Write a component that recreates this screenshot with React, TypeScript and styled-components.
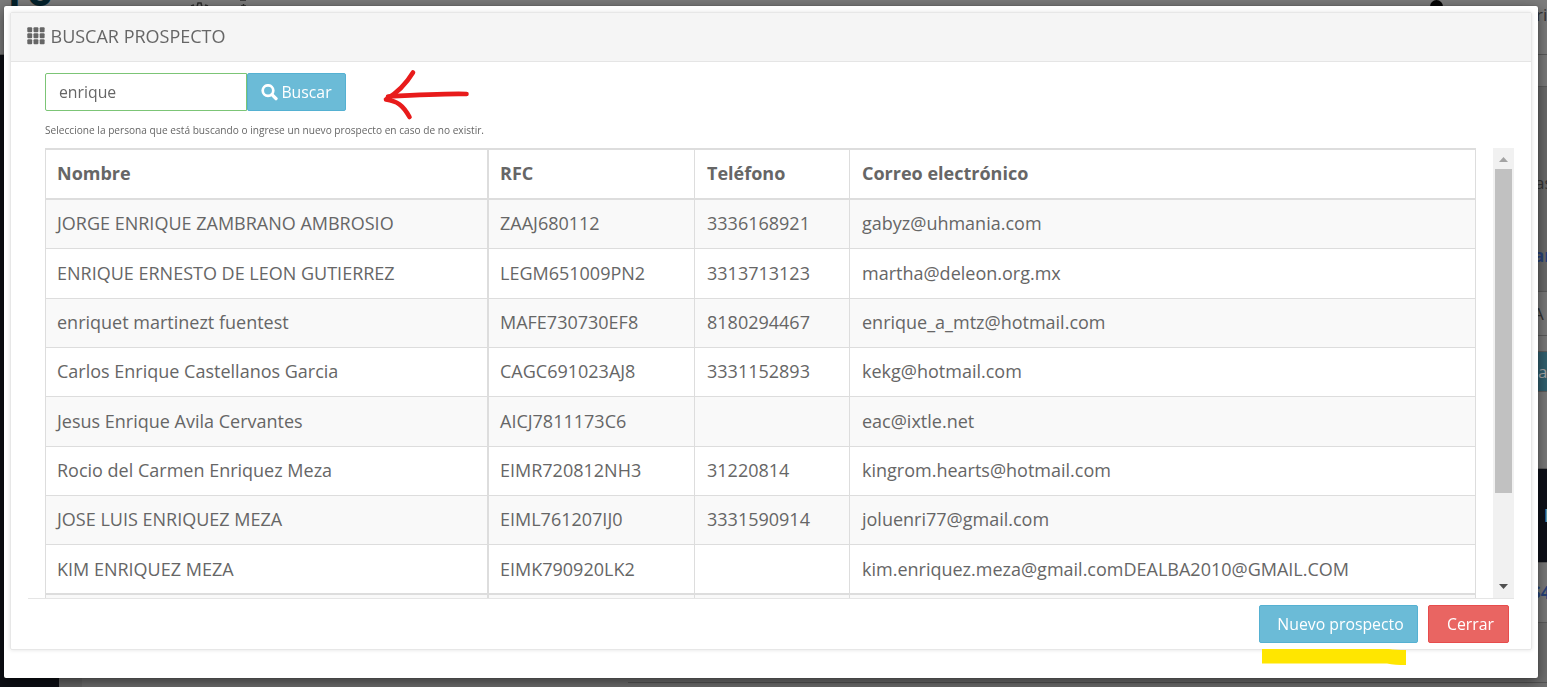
import { memo } from 'react';
import styled, { createGlobalStyle } from 'styled-components';

const GlobalStyle = createGlobalStyle`
  * {
    box-sizing: border-box;
  }

  body {
    margin: 0;
    overflow: hidden;
    font-family: 'Open Sans', sans-serif;
    font-size: 18px;
    color: #666;
  }
`;

/* Page under the dialog */

const Page = styled.div`
  display: grid;
  grid-template-columns: 59px 23px 546px 1fr;
  grid-template-rows: 55px 1fr;
  width: 100vw;
  height: 687px;
  overflow: hidden;
  background-color: #6f6f6f;
`;

const TopBar = styled.div`
  grid-column: 1 / -1;
  display: flex;
  background-color: #7c7c7c;
  border-bottom: 1px solid #5a5a5a;
`;

const Brand = styled.div`
  width: 180px;
  padding-left: 8px;
  color: #04222c;
  font-size: 42px;
  font-weight: 700;
  line-height: 1;
  margin-top: -31px;
`;

const TopIcons = styled.svg`
  width: 80px;
  height: 8px;
`;

const Avatar = styled.div`
  width: 13px;
  height: 13px;
  margin-left: auto;
  border-radius: 50%;
  background-color: #050505;
`;

const UserName = styled.div`
  width: 17px;
  margin-left: 87px;
  padding: 3px 0 0 6px;
  color: #333;
  font-size: 17px;
  white-space: nowrap;
`;

const Sidebar = styled.div`
  background-color: #0d0f15;
`;

const Gutter = styled.div`
  background-color: #676767;
`;

const Middle = styled.div`
  background-color: #6f6f6f;
`;

const Side = styled.div`
  display: flex;
  flex-direction: column;
  align-items: flex-end;
  height: 628px;
  border-bottom: 1px solid #555;
`;

const SideCell = styled.div<{ $height: number; $indent?: number; $bg?: string; $color?: string; $bold?: boolean; $flat?: boolean }>`
  display: flex;
  flex: none;
  align-items: center;
  width: 17px;
  height: ${({ $height }) => $height}px;
  padding-left: ${({ $indent }) => $indent || 0}px;
  background-color: ${({ $bg }) => $bg || '#7a7a7a'};
  color: ${({ $color }) => $color || '#333'};
  font-size: 17px;
  font-weight: ${({ $bold }) => ($bold ? 700 : 400)};
  border-bottom: ${({ $flat }) => ($flat ? 0 : 1)}px solid #5c5c5c;
  white-space: nowrap;
`;

/* Dialog */

const Dialog = styled.div`
  position: fixed;
  top: 6px;
  left: 4px;
  width: 1534px;
  height: 672px;
  padding: 6px 6px 0;
  background-color: white;
  border-radius: 2px;
  box-shadow: 0 4px 14px rgba(0, 0, 0, 0.5), 0 0 1px rgba(0, 0, 0, 0.6);
`;

const Panel = styled.div`
  display: flex;
  flex-direction: column;
  height: 638px;
  border: 1px solid #e7e7e7;
  border-radius: 2px;
  box-shadow: 0 0 4px rgba(0, 0, 0, 0.12);
`;

const PanelHeader = styled.div`
  display: flex;
  align-items: center;
  gap: 5.5px;
  height: 49px;
  flex: none;
  padding: 0 0 2px 16px;
  background-color: #f5f5f5;
  border-bottom: 1px solid #e5e5e5;
`;

const PanelBody = styled.div`
  flex: none;
  height: 537px;
  margin: 0 17px 0 17px;
  padding: 11px 0 0 17px;
  border-bottom: 1px solid #e5e5e5;
`;

const SearchRow = styled.div`
  display: flex;
  height: 38px;
`;

const SearchInput = styled.input`
  width: 202px;
  padding: 0 13px;
  border: 1px solid #7cc576;
  border-radius: 2px 0 0 2px;
  color: #666;
  font-family: inherit;
  font-size: 15.8px;
  outline: none;
`;

const Button = styled.button<{ $danger?: boolean; $width: number; $shift?: number }>`
  display: flex;
  align-items: center;
  justify-content: center;
  gap: 3px;
  width: ${({ $width }) => $width}px;
  height: 38px;
  padding: 0 0 0 ${({ $shift }) => $shift || 0}px;
  border: 1px solid ${({ $danger }) => ($danger ? '#e74c4c' : '#55b1d2')};
  border-radius: 2px;
  background-color: ${({ $danger }) => ($danger ? '#e96562' : '#6bbbd7')};
  color: white;
  font-family: inherit;
  font-size: 15.8px;
`;

const Hint = styled.div`
  height: 37px;
  padding-top: 12px;
  font-size: 10.13px;
  line-height: 15px;
`;

const ScrollArea = styled.div`
  display: flex;
  justify-content: space-between;
  height: 450px;
  overflow: hidden;
`;

const Table = styled.div`
  width: 1431px;
  flex: none;
  border: 1px solid #ddd;
  border-top-width: 2px;
  border-bottom: 0;
  height: 470px;
`;

const Row = styled.div<{ $height: number; $striped?: boolean; $thick?: boolean; $head?: boolean }>`
  display: grid;
  grid-template-columns: 443px 206px 155px 1fr;
  height: ${({ $height }) => $height}px;
  background-color: ${({ $striped }) => ($striped ? '#f9f9f9' : 'white')};
  border-bottom: ${({ $thick }) => ($thick ? 2 : 1)}px solid #ddd;
  font-weight: ${({ $head }) => ($head ? 700 : 400)};
`;

const Cell = styled.div<{ $last?: boolean }>`
  display: flex;
  align-items: center;
  padding: 0 0 ${({ $last }) => ($last ? 1 : 2)}px 12px;
  border-right: 1px solid #ddd;
  white-space: nowrap;

  &:first-child {
    padding-left: 11px;
    border-right-width: 2px;
  }

  &:nth-child(2) {
    padding-left: 11px;
  }

  &:last-child {
    border-right: 0;
  }
`;

const ScrollBar = styled.div`
  display: flex;
  flex-direction: column;
  width: 21px;
  background-color: #f1f1f1;
`;

const ScrollArrow = styled.svg`
  flex: none;
  width: 21px;
  height: 21px;
`;

const ScrollThumb = styled.div`
  width: 17px;
  height: 324px;
  margin: 0 2px auto;
  background-color: #c1c1c1;
`;

const Footer = styled.div`
  display: flex;
  justify-content: flex-end;
  gap: 10px;
  padding: 6px 22px 0 0;
`;

const ArrowMark = styled.svg`
  position: absolute;
  top: 54px;
  left: 371px;
  width: 105px;
  height: 65px;
`;

const Highlight = styled.svg`
  position: absolute;
  top: 642px;
  left: 1257px;
  width: 146px;
  height: 18px;
`;

type Prospect = {
  name: string;
  rfc: string;
  phone?: string;
  email: string;
  height: number;
}

const prospects: Array<Prospect> = [
  { name: 'JORGE ENRIQUE ZAMBRANO AMBROSIO', rfc: 'ZAAJ680112', phone: '3336168921', email: 'gabyz@uhmania.com', height: 49 },
  { name: 'ENRIQUE ERNESTO DE LEON GUTIERREZ', rfc: 'LEGM651009PN2', phone: '3313713123', email: 'martha@deleon.org.mx', height: 50 },
  { name: 'enriquet martinezt fuentest', rfc: 'MAFE730730EF8', phone: '8180294467', email: 'enrique_a_mtz@hotmail.com', height: 49 },
  { name: 'Carlos Enrique Castellanos Garcia', rfc: 'CAGC691023AJ8', phone: '3331152893', email: 'kekg@hotmail.com', height: 49 },
  { name: 'Jesus Enrique Avila Cervantes', rfc: 'AICJ7811173C6', email: 'eac@ixtle.net', height: 50 },
  { name: 'Rocio del Carmen Enriquez Meza', rfc: 'EIMR720812NH3', phone: '31220814', email: 'kingrom.hearts@hotmail.com', height: 49 },
  { name: 'JOSE LUIS ENRIQUEZ MEZA', rfc: 'EIML761207IJ0', phone: '3331590914', email: 'joluenri77@gmail.com', height: 49 },
  { name: 'KIM ENRIQUEZ MEZA', rfc: 'EIMK790920LK2', email: 'kim.enriquez.meza@gmail.comDEALBA2010@GMAIL.COM', height: 50 },
];

const GridIcon = () => (
  <svg width="18" height="18" viewBox="0 0 18 18" fill="#666">
    {[0, 6, 12].map(y => [0, 6.2, 12.4].map(x => (
      <rect key={`${x}-${y}`} x={x + 0.3} y={y + 0.3} width="4.9" height="5" rx="1" />
    )))}
  </svg>
);

const SearchIcon = () => (
  <svg width="17" height="17" viewBox="0 0 17 17" fill="none" stroke="white">
    <circle cx="7" cy="6.6" r="5.3" strokeWidth="2.7" />
    <path d="M11 10.600l4 4" strokeWidth="3.4" strokeLinecap="round" />
  </svg>
);

const ProspectRow: React.FC<{ item: Prospect; last: boolean; striped: boolean }> = memo(({ item, last, striped }) => (
  <Row $height={item.height} $striped={striped} $thick={last}>
    <Cell $last={last}>{item.name}</Cell>
    <Cell $last={last}>{item.rfc}</Cell>
    <Cell $last={last}>{item.phone}</Cell>
    <Cell $last={last}>{item.email}</Cell>
  </Row>
));

const App = () => (
  <>
    <GlobalStyle />
    <Page>
      <TopBar>
        <Brand>ro</Brand>
        <TopIcons viewBox="0 0 80 8" fill="none" stroke="#2c2c2c" strokeWidth="1.5">
          <path d="M11 6l3-1M17 7l1-4h3l1 4M25 5l3 1" />
          <path d="M60 0h6M61 6h5M63.500 4v3" />
        </TopIcons>
        <Avatar />
        <UserName>ri</UserName>
      </TopBar>
      <Sidebar />
      <Gutter />
      <Middle />
      <Side>
        <SideCell $height={32} />
        <SideCell $height={70} $bg="#6a6a6a" $flat />
        <SideCell $height={51} $indent={5} $bg="#6a6a6a" $flat>as</SideCell>
        <SideCell $height={12} $bg="#6a6a6a" $flat />
        <SideCell $height={72} $indent={4} $bg="#6a6a6a" $color="#27427a" $bold>an</SideCell>
        <SideCell $height={44} $indent={3}>A</SideCell>
        <SideCell $height={16} />
        <SideCell $height={40} $indent={8} $bg="#31606f" $color="#aaa">a</SideCell>
        <SideCell $height={77} />
        <SideCell $height={94} $indent={14} $bg="#0d1018" $color="#5f9bab" $bold>I</SideCell>
        <SideCell $height={60} $indent={1} $color="#27427a" $bold>$4</SideCell>
      </Side>
    </Page>
    <Dialog>
      <Panel>
        <PanelHeader>
          <GridIcon />
          <span>BUSCAR PROSPECTO</span>
        </PanelHeader>
        <PanelBody>
          <SearchRow>
            <SearchInput defaultValue="enrique" />
            <Button $width={99}>
              <SearchIcon />
              Buscar
            </Button>
          </SearchRow>
          <Hint>Seleccione la persona que está buscando o ingrese un nuevo prospecto en caso de no existir.</Hint>
          <ScrollArea>
            <Table>
              <Row $height={50} $thick $head>
                <Cell>Nombre</Cell>
                <Cell>RFC</Cell>
                <Cell>Teléfono</Cell>
                <Cell>Correo electrónico</Cell>
              </Row>
              {prospects.map((item, index) => (
                <ProspectRow
                  key={item.rfc}
                  item={item}
                  striped={index % 2 === 0}
                  last={index === prospects.length - 1}
                />
              ))}
              <Row $height={49} $striped>
                <Cell />
                <Cell />
                <Cell />
                <Cell />
              </Row>
            </Table>
            <ScrollBar>
              <ScrollArrow viewBox="0 0 21 21"><path d="M6 14l4.500-5 4.500 5z" fill="#a3a3a3" /></ScrollArrow>
              <ScrollThumb />
              <ScrollArrow viewBox="0 0 21 21"><path d="M6 7l4.500 5 4.500-5z" fill="#505050" /></ScrollArrow>
            </ScrollBar>
          </ScrollArea>
        </PanelBody>
        <Footer>
          <Button $width={159} $shift={4}>Nuevo prospecto</Button>
          <Button $danger $width={81} $shift={4}>Cerrar</Button>
        </Footer>
      </Panel>
      <ArrowMark viewBox="0 0 105 65" fill="none" stroke="#e81b1b" strokeWidth="4.6" strokeLinecap="round" strokeLinejoin="round">
        <path d="M91.500 34C70 33.500 40 35 13 36.500" />
        <path d="M38 12.500C31 24 22 33 11 39.500C22 41 28 45 34.500 57" />
      </ArrowMark>
      <Highlight viewBox="0 0 146 18" fill="#ffe600">
        <path d="M1 1H128Q134 2 145 2V17Q134 17 126 15.500H1z" />
      </Highlight>
    </Dialog>
  </>
);

export default App;
